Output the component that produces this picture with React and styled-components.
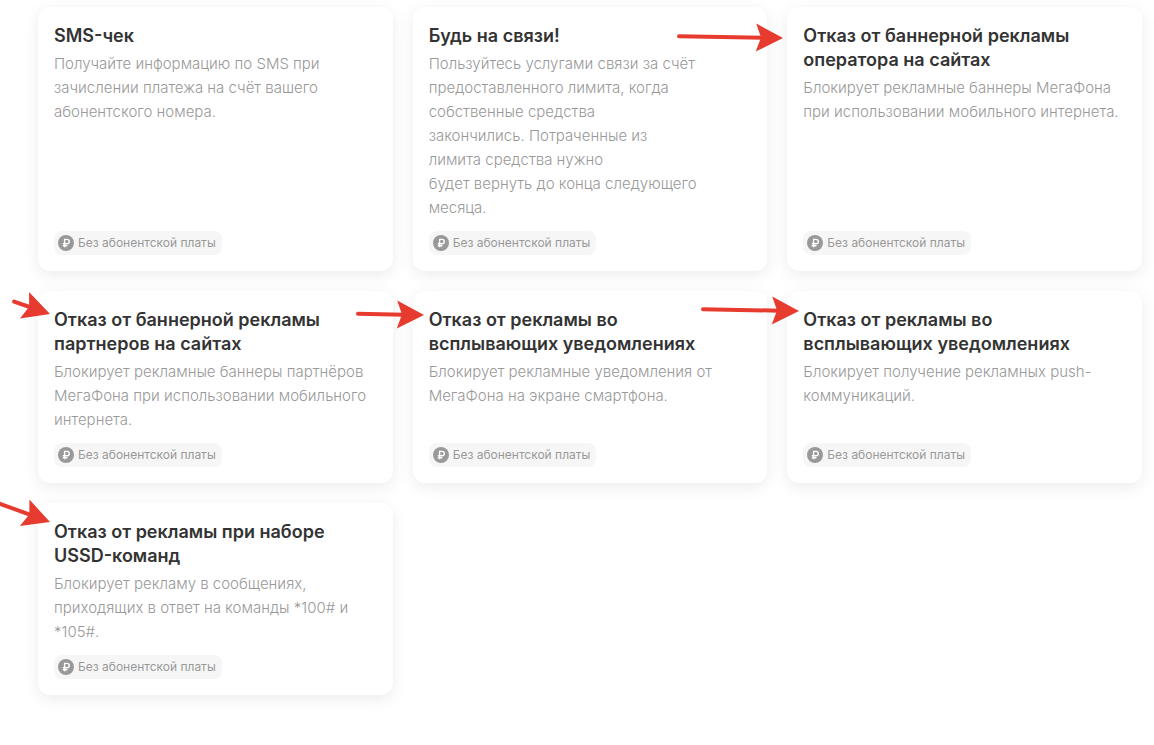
import React from "react";
import styled, { createGlobalStyle } from "styled-components";

const GlobalStyle = createGlobalStyle`
  * { box-sizing: border-box; }
  body {
    margin: 0;
    background: #fff;
    font-family: Inter, "Liberation Sans", sans-serif;
  }
`;

const Services = styled.ul`
  display: grid;
  grid-template-columns: repeat(3, minmax(0, 1fr));
  gap: 20px;
  margin: 0;
  padding: 7px 12px 32px 38px;
  list-style: none;
`;

const Card = styled.li`
  position: relative;
  display: flex;
  flex-direction: column;
  align-items: flex-start;
  padding: 17px 16px 16px;
  border-radius: 12px;
  background: #fff;
  box-shadow: 0 4px 16px rgba(0, 0, 0, 0.08);
`;

const Title = styled.h2`
  margin: 0 0 4px;
  color: #333;
  font-size: 18px;
  font-weight: 600;
  line-height: 24px;
  white-space: pre-line;
`;

const Description = styled.p`
  margin: 0 0 11px;
  color: #999;
  font-size: 15px;
  font-weight: 300;
  line-height: 24px;
  white-space: pre-line;
`;

const Fee = styled.span`
  display: inline-flex;
  align-items: center;
  gap: 4px;
  height: 24px;
  margin-top: auto;
  padding: 0 6px 0 4px;
  border-radius: 8px;
  background: #f6f6f6;
  color: #999;
  font-size: 12px;
  line-height: 24px;
  white-space: nowrap;
`;

const Pointer = styled.svg`
  position: absolute;
  top: 0;
  left: 0;
  width: 1px;
  height: 1px;
  overflow: visible;
  pointer-events: none;
`;

function RubleIcon() {
  return (
    <svg width="16" height="16" viewBox="0 0 16 16" aria-hidden="true">
      <circle cx="8" cy="8" r="8" fill="#999" />
      <path
        d="M6.6 12.2V4.4h2.5a2.2 2.2 0 0 1 0 4.4H4.8M4.8 10.7h4.6"
        fill="none"
        stroke="#fff"
        strokeWidth="1.4"
      />
    </svg>
  );
}

function Arrow({ x, y, angle, length }) {
  return (
    <Pointer aria-hidden="true">
      <g transform={`translate(${x} ${y}) rotate(${angle})`} fill="#e63b2e">
        <path
          d={`M${-length} 0H-20`}
          stroke="#e63b2e"
          strokeWidth="4"
          strokeLinecap="round"
        />
        <path d="M0 0L-27 -14L-22 0L-27 14Z" />
      </g>
    </Pointer>
  );
}

const services = [
  {
    title: "SMS-чек",
    text: "Получайте информацию по SMS при\nзачислении платежа на счёт вашего\nабонентского номера.",
  },
  {
    title: "Будь на связи!",
    text: "Пользуйтесь услугами связи за счёт\nпредоставленного лимита, когда\nсобственные средства\nзакончились. Потраченные из\nлимита средства нужно\nбудет вернуть до конца следующего\nмесяца.",
  },
  {
    title: "Отказ от баннерной рекламы\nоператора на сайтах",
    text: "Блокирует рекламные баннеры МегаФона\nпри использовании мобильного интернета.",
    arrow: { x: -4, y: 31, angle: 1, length: 104 },
  },
  {
    title: "Отказ от баннерной рекламы\nпартнеров на сайтах",
    text: "Блокирует рекламные баннеры партнёров\nМегаФона при использовании мобильного\nинтернета.",
    arrow: { x: 12, y: 23, angle: 19, length: 38 },
  },
  {
    title: "Отказ от рекламы во\nвсплывающих уведомлениях",
    text: "Блокирует рекламные уведомления от\nМегаФона на экране смартфона.",
    arrow: { x: 11, y: 24, angle: 1, length: 66 },
  },
  {
    title: "Отказ от рекламы во\nвсплывающих уведомлениях",
    text: "Блокирует получение рекламных push-\nкоммуникаций.",
    arrow: { x: 12, y: 20, angle: 1, length: 96 },
  },
  {
    title: "Отказ от рекламы при наборе\nUSSD-команд",
    text: "Блокирует рекламу в сообщениях,\nприходящих в ответ на команды *100# и\n*105#.",
    arrow: { x: 12, y: 19, angle: 20, length: 57 },
  },
];

export default function App() {
  return (
    <>
      <GlobalStyle />
      <main>
        <Services>
          {services.map((service, index) => (
            <Card key={index}>
              <Title>{service.title}</Title>
              <Description>{service.text}</Description>
              <Fee>
                <RubleIcon />
                Без абонентской платы
              </Fee>
              {service.arrow && <Arrow {...service.arrow} />}
            </Card>
          ))}
        </Services>
      </main>
    </>
  );
}
